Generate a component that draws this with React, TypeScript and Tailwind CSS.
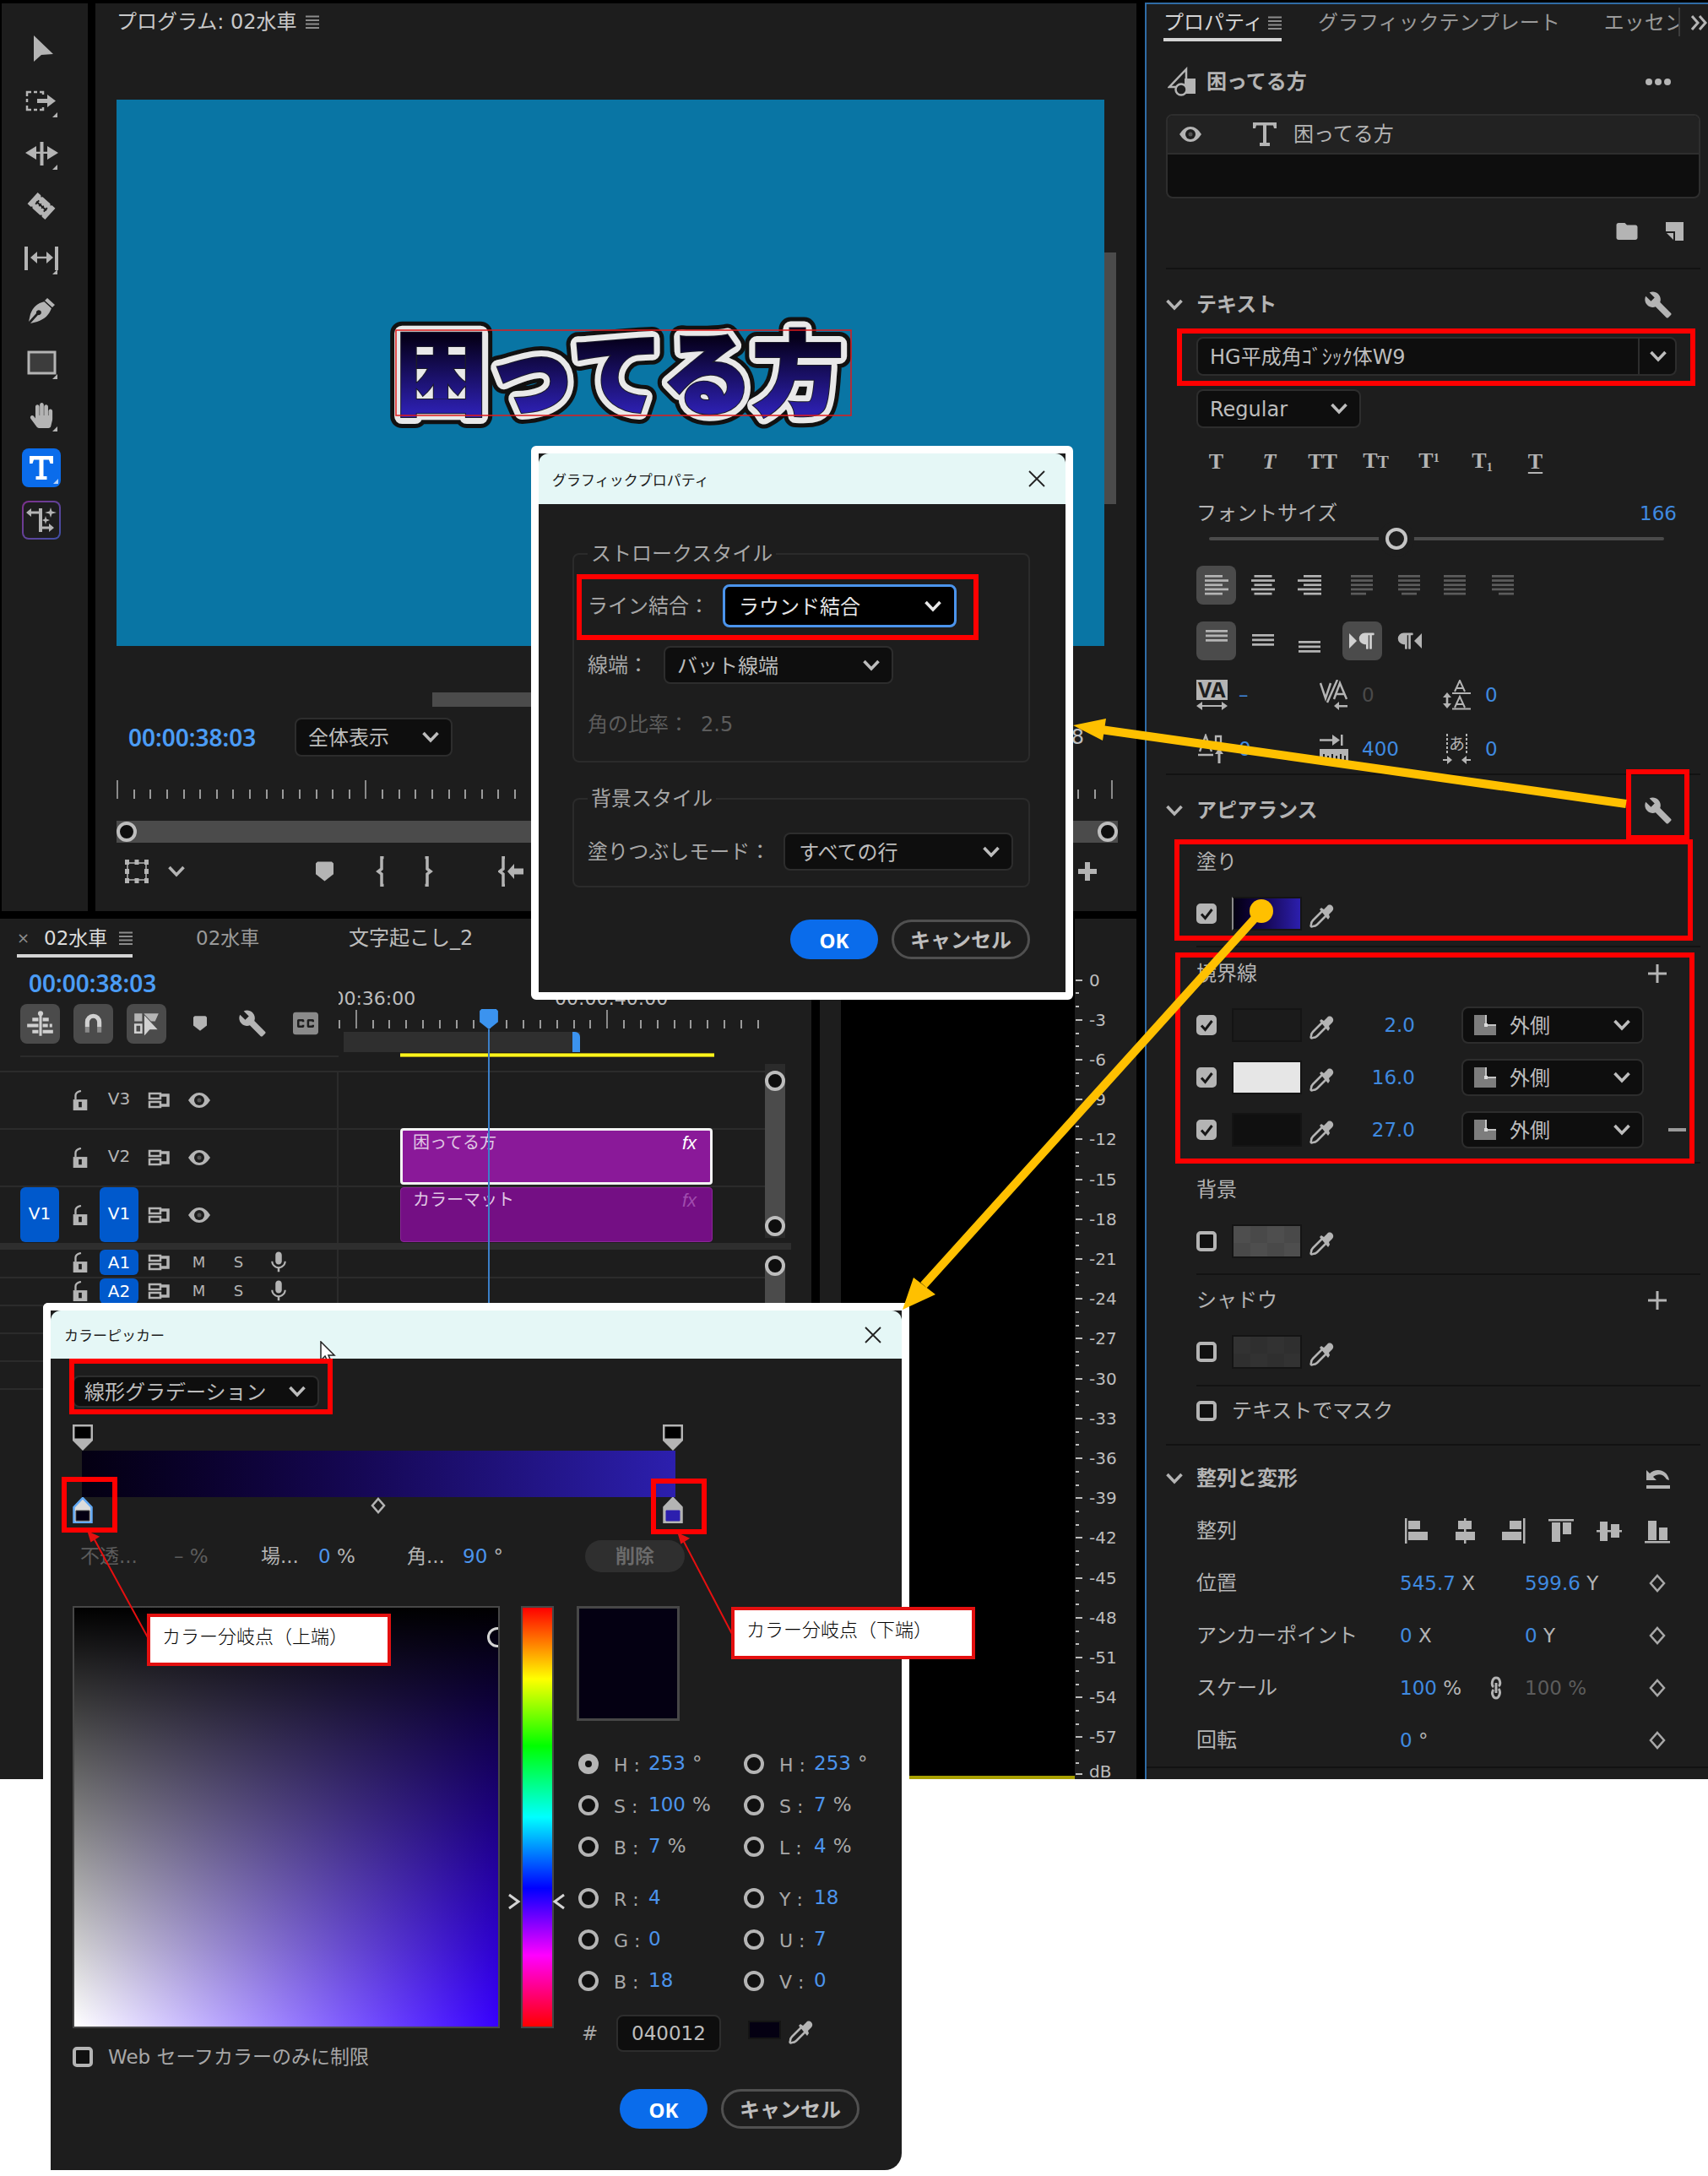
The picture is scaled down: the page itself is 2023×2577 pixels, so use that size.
import { useState } from 'react';
import type { ReactNode } from 'react';
import {
  MdBuild,
  MdClosedCaption,
  MdColorize,
  MdFolder,
  MdMic,
} from 'react-icons/md';
import { FaHandPaper, FaParagraph } from 'react-icons/fa';

/* ---------- small shared parts ---------- */

function Chevron({ className = '' }: { className?: string }) {
  return (
    <svg viewBox="0 0 20 14" className={`h-3.5 w-5 ${className}`} fill="none" stroke="currentColor" strokeWidth="3.6">
      <path d="M1.5 2 10 11l8.5-9" />
    </svg>
  );
}

function Burger() {
  return (
    <svg viewBox="0 0 16 16" className="size-4 text-[#8c8c8c]" stroke="currentColor" strokeWidth="2">
      <path d="M0 1.5h16M0 6h16M0 10.500h16M0 15h16" />
    </svg>
  );
}

type SelectBoxProps = {
  label: string;
  options: string[];
  className?: string;
  chevron?: string;
};

function SelectBox({ label, options, className = '', chevron = 'right-4' }: SelectBoxProps) {
  return (
    <div className="relative flex items-center text-[#bdbdbd]">
      <select
        aria-label={label}
        className={`appearance-none rounded-lg border-2 border-[#2d2d2d] bg-[#0e0e0e] pt-0.5 text-2xl leading-none outline-none ${className}`}
      >
        {options.map((o) => (
          <option key={o}>{o}</option>
        ))}
      </select>
      <Chevron className={`pointer-events-none absolute ${chevron}`} />
    </div>
  );
}

function CheckBox({ label, on = false, id }: { label: string; on?: boolean; id?: string }) {
  const [checked, setChecked] = useState(on);
  return (
    <span className="relative flex size-6 shrink-0">
      <input
        id={id}
        type="checkbox"
        aria-label={label}
        checked={checked}
        onChange={(e) => setChecked(e.target.checked)}
        className="size-6 appearance-none rounded-[5px] border-4 border-[#b4b4b4] bg-[#101010] checked:bg-[#b4b4b4]"
      />
      {checked && (
        <svg viewBox="0 0 24 24" className="pointer-events-none absolute size-6" fill="none" stroke="#161616" strokeWidth="3">
          <path d="m6 12.500 4.500 5L18.500 7" />
        </svg>
      )}
    </span>
  );
}

// bulb at the top right, hollow glass tube running to the bottom left
function Eyedropper() {
  return (
    <svg viewBox="0 0 30 30" className="mx-[3px] size-[30px] text-[#b4b4b4]">
      <path d="M15 10 4 21c-2 2-2 3-2 5-1 2 0 3 2 2 2 0 3 0 5-2l11-11" fill="none" stroke="currentColor" strokeWidth="2.500" strokeLinejoin="round" />
      <path d="m12 8 2-2 3 2 4-4c3-4 10 1 6 6l-4 4 1 3-2 3Z" fill="currentColor" />
    </svg>
  );
}

function Eye() {
  return (
    <svg viewBox="0 0 26 20" className="h-5 w-[26px] text-[#b4b4b4]">
      <path d="M0 10C4 4 8 1 13 1s9 3 13 9c-4 6-8 9-13 9S4 16 0 10Z" fill="currentColor" />
      <circle cx="13" cy="10" r="6" fill="#1d1d1d" />
      <circle cx="13" cy="10" r="2.500" fill="currentColor" opacity=".35" />
    </svg>
  );
}

function Marker({ className }: { className: string }) {
  return (
    <svg viewBox="0 0 20 22" className={className} fill="currentColor">
      <path d="M2 0h16l2 2v12l-10 8L0 14V2Z" />
    </svg>
  );
}

/* ---------- tools ---------- */

const corner = <path d="M42 36v6h-6Z" />;

const tools: { name: string; art: ReactNode }[] = [
  { name: '選択', art: <path d="M14 7v31l9-8 14-1Z" /> },
  {
    name: 'トラックの前方選択',
    art: (
      <>
        <g fill="none" stroke="currentColor" strokeWidth="2.500">
          <path d="M6 17v-5h5M14 12h4M21 12h4v3M6 20v4M6 28v5h5M14 33h4M21 33h4v-3" />
        </g>
        <path d="M18 20h12v-5l10 7.500L30 30v-5H18Z" />
        {corner}
      </>
    ),
  },
  {
    name: 'リップル',
    art: (
      <>
        <path d="M21.500 9h4v28h-4ZM4 22l13-8v16ZM43 22l-13-8v16Z" />
        <path d="M14 20.700h18v2.300H14Z" />
        {corner}
      </>
    ),
  },
  {
    name: 'レーザー',
    art: (
      <g transform="rotate(42 23 23)">
        <path d="M9 14h5l1.500 1.500L17 14h12l1.500 1.500L32 14h5v18h-5l-1.500-1.500L29 32H17l-1.500-1.500L14 32H9Z" />
        <path d="M15 23h16M16.500 20v6M29.500 20v6" stroke="#1d1d1d" strokeWidth="2" />
        <path d="M21 21v4M25 21v4" stroke="#1d1d1d" strokeWidth="1.500" />
      </g>
    ),
  },
  {
    name: 'スリップ',
    art: (
      <>
        <path d="M3 9h4v28H3ZM39 9h4v28h-4ZM10 22l8-7v14ZM37 22l-8-7v14Z" />
        <path d="M15 20.800h16v2.400H15Z" />
        {corner}
      </>
    ),
  },
  {
    name: 'ペン',
    art: (
      <>
        <path d="m27 12 8 8c-3 8-8 13-17 16l-8 2 9-10a3 3 0 1 0-2-2L8 36l2-9c3-8 8-13 17-15Z" />
        <path d="m26 11 4-4 10 9-4 4Z" stroke="#1d1d1d" strokeWidth="1.500" />
      </>
    ),
  },
  {
    name: '長方形',
    art: (
      <>
        <path d="M8 10h31v25H8Z" fill="#3c3c3c" stroke="currentColor" strokeWidth="3" />
        {corner}
      </>
    ),
  },
  { name: '手のひら', art: null },
  { name: '横書き文字', art: null },
  { name: '生成延長', art: null },
];

function ToolBar() {
  return (
    <nav className="flex w-[102px] flex-col items-center gap-4 bg-[#1d1d1d] pt-[31px] pr-2">
      {tools.map((t) => {
        if (t.name === '横書き文字') {
          return (
            <button key={t.name} aria-label={t.name} className="size-[46px] rounded-lg bg-[#0a6ceb] text-white">
              <svg viewBox="0 0 46 46" fill="currentColor">
                <path d="M9 9h28v9h-3.500l-1.500-4.500h-6.500V33h4v4h-13v-4h4V13.500H14L12.500 18H9Z" />
                <path d="M43 36v6h-6Z" opacity=".7" />
              </svg>
            </button>
          );
        }
        if (t.name === '生成延長') {
          return (
            <button key={t.name} aria-label={t.name} className="size-[46px] rounded-lg bg-linear-to-br from-[#7d2f8c] to-[#3c4fa6] p-[2px]">
              <svg viewBox="2 2 42 42" className="rounded-md bg-[#1d1d1d] text-[#b4b4b4]" fill="currentColor">
                <path d="M20 9h4v28h-4ZM5 14l6-5v3.500h10v3H11V19ZM38 32l-6-5v3.500h-8v3h8V37Z" />
                <path d="m34 8 1.500 4.500L41 14l-5.500 1.500L34 20l-1.500-4.500L27 14l5.500-1.500ZM28 18l1 3.500 4 1.500-4 1.500L28 28l-1-3.500-3-1.500 3-1.500Z" />
              </svg>
            </button>
          );
        }
        if (t.name === '手のひら') {
          return (
            <button key={t.name} aria-label={t.name} className="relative flex size-[46px] items-center justify-center text-[#b4b4b4]">
              <FaHandPaper className="size-[30px]" />
              <svg viewBox="0 0 46 46" className="absolute size-[46px]" fill="currentColor">
                {corner}
              </svg>
            </button>
          );
        }
        return (
          <button key={t.name} aria-label={t.name} className="size-[46px] text-[#b4b4b4]">
            <svg viewBox="0 0 46 46" fill="currentColor">
              {t.art}
            </svg>
          </button>
        );
      })}
    </nav>
  );
}

/* ---------- program monitor ---------- */

const titleText = '困ってる方';

function TitleGraphic() {
  const common = {
    x: 0,
    y: 91,
    fontSize: 107,
    fontWeight: 900,
    strokeLinejoin: 'round' as const,
  };
  return (
    <svg viewBox="0 0 539 101" className="block overflow-visible font-['Noto_Sans_CJK_JP',sans-serif]" aria-label={titleText}>
      <defs>
        <linearGradient id="titleFill" x1="0" y1="0" x2="0" y2="101" gradientUnits="userSpaceOnUse">
          <stop offset="0.1" stopColor="#06001c" />
          <stop offset="0.95" stopColor="#2c1fae" />
        </linearGradient>
      </defs>
      <text {...common} fill="#111" stroke="#111" strokeWidth="28" aria-hidden="true">{titleText}</text>
      <text {...common} fill="#e9e9e9" stroke="#e9e9e9" strokeWidth="18" aria-hidden="true">{titleText}</text>
      <text {...common} fill="#1b1b2a" stroke="#1b1b2a" strokeWidth="4" strokeLinejoin="miter" aria-hidden="true">{titleText}</text>
      <text {...common} fill="url(#titleFill)" stroke="url(#titleFill)" strokeWidth="2" strokeLinejoin="miter">{titleText}</text>
      <rect width="539" height="101" fill="none" stroke="#e01b1b" strokeWidth="1.500" />
    </svg>
  );
}

function ProgramPanel() {
  const ticks = Array.from({ length: 61 }, (_, i) => i);
  return (
    <section className="flex min-w-0 flex-1 flex-col bg-[#1d1d1d] pr-6 pb-[15px] pl-[25px] text-[#bdbdbd]">
      <header className="flex h-11 items-center">
        <h2 className="mr-2.5 text-[24px] leading-none text-[#c8c8c8]">プログラム: 02水車</h2>
        <Burger />
      </header>

      <div className="mt-[70px] flex">
        <div className="h-[647px] flex-1 bg-[#0975a4] pt-[273px] pl-[331px]">
          <div className="w-[539px]">
            <TitleGraphic />
          </div>
        </div>
        <div className="mt-[181px] h-[298px] w-3.5 bg-[#4b4b4b]" />
      </div>
      <div className="mt-[55px] ml-[374px] h-[17px] w-[420px] bg-[#4b4b4b]" />

      <div className="mt-[13px] flex h-[46px] items-center pl-[14px]">
        <span className="w-[197px] font-['Noto_Sans'] text-[28px] leading-none font-semibold text-[#4b9cf5]">00:00:38:03</span>
        <SelectBox label="ズームレベル" options={['全体表示']} className="h-[46px] w-[187px] pl-3.5" />
        <span className="ml-auto pr-[38px] text-2xl leading-none">8</span>
      </div>

      <div className="mt-7 mr-1 flex h-[22px] items-end justify-between">
        {ticks.map((i) => (
          <span key={i} className={i % 15 === 0 ? 'h-[22px] w-[2px] bg-[#8a8a8a]' : 'h-[11px] w-[2px] bg-[#9a9a9a]'} />
        ))}
      </div>

      <div className="mt-[26px] -mr-[2px] flex h-[26px] items-center justify-between bg-[#4b4b4b]">
        <span className="size-6 rounded-full border-4 border-[#bdbdbd] bg-[#0e0e0e]" />
        <span className="size-6 rounded-full border-4 border-[#bdbdbd] bg-[#0e0e0e]" />
      </div>

      <div className="flex h-[66px] items-center pt-0.5 text-[#b4b4b4]">
        <button aria-label="変形" className="ml-[9px]">
          <svg viewBox="0 0 30 28" className="h-7 w-[30px]" fill="currentColor">
            <path d="M4 4h22v20H4Z" fill="none" stroke="currentColor" strokeWidth="1.500" />
            <path d="M1 0h5v6H1ZM12.500 0h5v6h-5ZM24 0h5v6h-5ZM1 11h5v6H1ZM24 11h5v6h-5ZM1 22h5v6H1ZM12.500 22h5v6h-5ZM24 22h5v6h-5Z" />
          </svg>
        </button>
        <Chevron className="ml-[22px]" />
        <button aria-label="マーカーを追加" className="ml-[155px]">
          <Marker className="h-[26px] w-[21px]" />
        </button>
        <button aria-label="インをマーク" className="ml-[50px]">
          <svg viewBox="0 0 10 36" className="h-9 w-2.5" fill="none" stroke="currentColor" strokeWidth="3.500">
            <path d="M9.500 1.500H7V15l-4 3 4 3v13.500h2.500" />
          </svg>
        </button>
        <button aria-label="アウトをマーク" className="ml-[48px]">
          <svg viewBox="0 0 10 36" className="h-9 w-2.5" fill="none" stroke="currentColor" strokeWidth="3.500">
            <path d="M.5 1.500H3V15l4 3-4 3v13.500H.5" />
          </svg>
        </button>
        <button aria-label="インへ移動" className="ml-[77px]">
          <svg viewBox="0 0 30 36" className="h-9 w-[30px]" fill="currentColor">
            <path d="M8 1.500H6V15l-4 3 4 3v13.500h2" fill="none" stroke="currentColor" strokeWidth="3.500" />
            <path d="m11 18 8-9v5.500h11v7H19V27Z" />
          </svg>
        </button>
        <button aria-label="ボタンエディター" className="mr-[22px] ml-auto">
          <svg viewBox="0 0 24 24" className="size-6" stroke="currentColor" strokeWidth="6">
            <path d="M12 1v22M1 12h22" />
          </svg>
        </button>
      </div>
    </section>
  );
}

/* ---------- timeline ---------- */

function LockIcon() {
  return (
    <svg viewBox="0 0 20 26" className="ml-0.5 h-6 w-5 text-[#b4b4b4]">
      <path d="M4 12V7c0-4 3-5 7-6" fill="none" stroke="currentColor" strokeWidth="2.500" />
      <path d="M1 12h18v14H1Z" fill="currentColor" />
      <path d="M10 15v7" stroke="#1d1d1d" strokeWidth="4" />
    </svg>
  );
}

function SyncIcon() {
  return (
    <svg viewBox="0 0 26 20" className="h-5 w-[26px] text-[#b4b4b4]" fill="none" stroke="currentColor">
      <path d="M2 2h13v6H2ZM2 12h13v6H2Z" strokeWidth="2.500" />
      <path d="M16 4h8v12h-8" strokeWidth="3.500" />
    </svg>
  );
}

function TrackHead({ name, kind, on = false, patched = false }: { name: string; kind: 'v' | 'a'; on?: boolean; patched?: boolean }) {
  const size = kind === 'v' ? 'h-[65px]' : 'h-[30px]';
  return (
    <div className="grid w-[401px] grid-cols-[46px_48px_46px_48px_47px_47px_47px] content-start items-center justify-items-center border-r-2 border-[#2b2b2b] pl-6 text-xl leading-none text-[#b4b4b4]">
      {patched ? (
        <button className={`flex w-[46px] items-center justify-center rounded-md bg-[#0059cc] pb-1 text-white ${size}`}>V1</button>
      ) : (
        <span />
      )}
      <LockIcon />
      <button
        className={
          on
            ? `flex w-[46px] items-center justify-center rounded-md bg-[#0059cc] text-white ${kind === 'v' ? 'pb-1' : ''} ${size}`
            : `flex w-[46px] items-center justify-center pb-1 ${size}`
        }
      >
        {name}
      </button>
      <SyncIcon />
      {kind === 'v' ? (
        <Eye />
      ) : (
        <>
          <button className="text-lg leading-none">M</button>
          <button className="text-lg leading-none">S</button>
          <MdMic className="size-[30px]" />
        </>
      )}
    </div>
  );
}

function TimelinePanel() {
  const ticks = Array.from({ length: 26 }, (_, i) => i);
  return (
    <section className="relative min-w-0 flex-1 bg-[#1d1d1d] text-[#bdbdbd]">
      <div className="flex h-[46px] items-stretch pl-5 text-[23px] leading-none">
        <button className="flex w-[137px] items-center border-b-4 border-[#d4d4d4] pt-1 text-[#dcdcdc]">
          <span className="w-8 text-left text-lg text-[#8c8c8c]">×</span>
          <span className="flex-1 text-left">02水車</span>
          <Burger />
        </button>
        <button className="ml-[75px] w-[181px] text-left text-[#9a9a9a]">02水車</button>
        <button className="text-left text-2xl leading-none">文字起こし_2</button>
      </div>

      <div className="flex h-[134px] overflow-hidden">
        <div className="w-[401px] shrink-0">
          <div className="flex h-[55px] items-center pt-1 pl-[34px] font-['Noto_Sans'] text-[28px] leading-none font-semibold text-[#4b9cf5]">
            00:00:38:03
          </div>
          <div className="ml-6 flex h-[63px] items-start border-b-2 border-[#2b2b2b] text-[#b4b4b4]">
            <button aria-label="ネスト" className="size-[47px] rounded-lg bg-[#4b4b4b] text-[#d0d0d0]">
              <svg viewBox="0 0 46 46" fill="currentColor">
                <path d="M22 9h3v28h-3ZM14 16h7v4h-7ZM26 16h7v4h-7ZM8 23h13v4H8ZM26 23h6v4h-6ZM34 23h3v4h-3ZM14 30h7v4h-7ZM26 30h12v4H26Z" />
                <circle cx="23.500" cy="11" r="3" />
              </svg>
            </button>
            <button aria-label="スナップ" className="ml-4 size-[47px] rounded-lg bg-[#4b4b4b]">
              <svg viewBox="0 0 46 46" fill="none" strokeWidth="5">
                <path d="M16 27v-6a7 7 0 0 1 14 0v6" stroke="#d0d0d0" />
                <path d="M16 27v6M30 27v6" stroke="#8a8a8a" />
              </svg>
            </button>
            <button aria-label="リンクされた選択" className="ml-4 size-[47px] rounded-lg bg-[#4b4b4b]">
              <svg viewBox="0 0 46 46" fill="#d0d0d0">
                <path d="M9 11h9v9H9ZM20 11h17l-4 9H20Z" opacity=".8" />
                <path d="M10 24h7v9h-7Z" fill="none" stroke="#d0d0d0" strokeWidth="2.500" />
                <path d="M20 12v26l7-8h10Z" stroke="#4b4b4b" strokeWidth="1" />
              </svg>
            </button>
            <button aria-label="マーカー" className="mt-3 ml-8">
              <Marker className="h-[22px] w-4" />
            </button>
            <button aria-label="設定" className="mt-1.5 ml-[37px]">
              <MdBuild className="size-[34px]" />
            </button>
            <button aria-label="キャプション" className="mt-[3px] ml-[26px]">
              <MdClosedCaption className="size-10 text-[#8a8a8a]" />
            </button>
          </div>
        </div>
        <div className="flex-1 overflow-hidden pt-9">
          <div className="-ml-[43px] flex h-[22px] items-center pt-1 text-[22px] leading-none">
            <span className="w-[299px] shrink-0">00:00:36:00</span>
            <span className="w-[299px] shrink-0">00:00:40:00</span>
          </div>
          <div className="mt-1 flex h-[22px] w-[498px] items-end justify-between">
            {ticks.map((i) => (
              <span key={i} className={i % 15 === 1 ? 'h-[22px] w-[2px] bg-[#8a8a8a]' : 'h-2.5 w-[2px] bg-[#9a9a9a]'} />
            ))}
          </div>
          <div className="mt-1 ml-1.5 flex h-6 w-[280px] justify-end bg-[#2f2f2f]">
            <span className="h-6 w-[9px] rounded-tr-md bg-[#3b93ef]" />
          </div>
          <div className="mt-px ml-[73px] h-[5px] w-[372px] border-y border-[#a89d12] bg-[#fdf51c]" />
        </div>
      </div>

      <div className="flex">
        <div className="w-[906px]">
          <div className="flex h-[68px] border-t-2 border-[#2b2b2b]">
            <TrackHead name="V3" kind="v" />
          </div>
          <div className="flex h-[68px] border-t-2 border-[#2b2b2b]">
            <TrackHead name="V2" kind="v" />
            <div className="-mt-0.5 ml-[73px] flex h-[67px] w-[370px] items-start justify-between rounded-sm border-[3px] border-[#f4f4f4] bg-[#8a1999] px-3 pt-1 text-xl leading-none text-[#e0c8e4]">
              <span>困ってる方</span>
              <em className="pr-1 font-['Liberation_Sans'] text-[22px] leading-none text-white">fx</em>
            </div>
          </div>
          <div className="flex h-[68px] border-t-2 border-[#2b2b2b]">
            <TrackHead name="V1" kind="v" on patched />
            <div className="ml-[73px] flex h-[65px] w-[370px] items-start justify-between rounded-sm border border-[#8a2698] bg-[#740f84] px-3.5 pt-1 text-xl leading-none text-[#e0c8e4]">
              <span>カラーマット</span>
              <em className="pr-1 font-['Liberation_Sans'] text-[22px] leading-none text-[#a04cae]">fx</em>
            </div>
          </div>
          <div className="h-2 w-[937px] bg-[#2e2e2e]" />
          <div className="flex h-8">
            <TrackHead name="A1" kind="a" on />
          </div>
          <div className="flex h-[33px] border-t-2 border-[#2b2b2b]">
            <TrackHead name="A2" kind="a" on />
          </div>
          {[3, 4, 5].map((n) => (
            <div key={n} className="h-[33px] border-t-2 border-[#2b2b2b]" />
          ))}
          <div className="border-t-2 border-[#2b2b2b]" />
        </div>
        <div className="flex w-6 flex-col">
          <div className="-mt-2 flex h-[206px] flex-col bg-[#2b2b2b] pt-2">
            <div className="flex h-[196px] flex-col justify-between rounded-full bg-[#4b4b4b]">
              <span className="size-6 rounded-full border-4 border-[#bdbdbd] bg-[#0e0e0e]" />
              <span className="size-6 rounded-full border-4 border-[#bdbdbd] bg-[#0e0e0e]" />
            </div>
          </div>
          <div className="mt-[21px] h-[150px] rounded-t-full bg-[#4b4b4b]">
            <span className="block size-6 rounded-full border-4 border-[#bdbdbd] bg-[#0e0e0e]" />
          </div>
        </div>
      </div>

      {/* playhead */}
      <div className="absolute top-[107px] left-[568px] flex h-[350px] flex-col items-center text-[#3b93ef]">
        <Marker className="h-6 w-[22px]" />
        <span className="w-[2px] flex-1 bg-[#3b7fc8]" />
      </div>
    </section>
  );
}

function AudioMeters() {
  const levels = Array.from({ length: 20 }, (_, i) => (i === 0 ? '0' : `-${i * 3}`));
  return (
    <section className="w-[73px] bg-[#1d1d1d] pt-[49px] pl-px text-xl leading-none text-[#bdbdbd]">
      <ol className="flex h-[944px] flex-col">
        {levels.map((l) => (
          <li key={l} className="flex flex-1 items-center">
            <span className="flex w-4 flex-col justify-around self-stretch">
              <i className={l === '0' ? 'h-[2px] w-1' : 'h-[2px] w-1 bg-[#bdbdbd]'} />
              <i className="h-[2px] w-2 bg-[#bdbdbd]" />
              <i className="h-[2px] w-1 bg-[#bdbdbd]" />
            </span>
            {l}
          </li>
        ))}
      </ol>
      <div className="flex h-[26px] items-center">
        <span className="flex w-4 flex-col justify-around self-stretch">
          <i className="h-[2px] w-1 bg-[#bdbdbd]" />
          <i className="h-[2px] w-2 bg-[#bdbdbd]" />
        </span>
        <span className="pt-2">dB</span>
      </div>
    </section>
  );
}

/* ---------- properties ---------- */

function SectionHead({ title, children }: { title: string; children?: ReactNode }) {
  return (
    <div className="flex h-20 items-center pt-1 pr-[33px]">
      <Chevron className="mr-4" />
      <h3 className="flex-1 text-2xl leading-none font-bold">{title}</h3>
      {children}
    </div>
  );
}

function Divider({ indent = false }: { indent?: boolean }) {
  return <hr className={indent ? 'ml-9 border-t-2 border-[#121212]' : 'border-t-2 border-[#121212]'} />;
}

function ParagraphLines({ widths, align }: { widths: number[]; align: 'start' | 'center' | 'end' }) {
  const x = (w: number) => (align === 'start' ? 0 : align === 'end' ? 28 - w : (28 - w) / 2);
  return (
    <svg viewBox="0 0 28 30" className="h-[30px] w-7" fill="currentColor">
      {widths.map((w, i) => (
        <rect key={i} x={x(w)} y={3 + i * 5.2} width={w} height="2.7" />
      ))}
    </svg>
  );
}

const justify: { name: string; widths: number[]; align: 'start' | 'center' | 'end'; dim?: boolean; cell: string }[] = [
  { name: '左揃え', widths: [21, 28, 21, 28, 21], align: 'start', cell: 'w-[47px] rounded-lg bg-[#4b4b4b]' },
  { name: '中央揃え', widths: [21, 28, 21, 28, 21], align: 'center', cell: 'ml-2 w-[47px]' },
  { name: '右揃え', widths: [21, 28, 21, 28, 21], align: 'end', cell: 'ml-2 w-[47px]' },
  { name: '均等配置（左）', widths: [26, 26, 26, 26, 18], align: 'start', dim: true, cell: 'ml-4 w-[47px]' },
  { name: '均等配置（中央）', widths: [26, 26, 26, 26, 18], align: 'center', dim: true, cell: 'ml-2 w-[47px]' },
  { name: '両端揃え', widths: [26, 26, 26, 26, 26], align: 'start', dim: true, cell: 'ml-2 w-[47px]' },
  { name: '均等配置（右）', widths: [26, 26, 26, 26, 18], align: 'end', dim: true, cell: 'ml-2 w-[47px]' },
];

function VerticalLines({ y }: { y: number }) {
  return (
    <svg viewBox="0 0 26 34" className="h-[34px] w-[26px]" fill="currentColor">
      <path d={`M0 ${y}h26v2.700H0ZM0 ${y + 5.5}h26v2.700H0ZM0 ${y + 11}h26v2.700H0Z`} />
    </svg>
  );
}

function Metric({ icon, value, dim = false }: { icon: ReactNode; value: string; dim?: boolean }) {
  return (
    <div className="flex items-center gap-3">
      <svg viewBox="0 0 38 36" className="h-9 w-[38px] font-['Noto_Sans']" fill="currentColor">
        {icon}
      </svg>
      <span className={dim ? 'text-[#4a4a4a]' : 'text-[#3f8ae0]'}>{value}</span>
    </div>
  );
}

const strokes = [
  { width: '2.0', swatch: 'bg-[#1b1b1b]' },
  { width: '16.0', swatch: 'bg-[#e6e6e6]' },
  { width: '27.0', swatch: 'bg-[#101010]' },
];

function StrokeRow({ width, swatch, last }: { width: string; swatch: string; last: boolean }) {
  return (
    <div className="flex h-[62px] items-center">
      <CheckBox label={`境界線 ${width}`} on />
      <button aria-label="境界線カラー" className={`ml-[18px] h-10 w-[83px] border-2 border-[#141414] ${swatch}`} />
      <span className="ml-1.5 pt-1">
        <Eyedropper />
      </span>
      <span className="w-[92px] text-right text-[#3f8ae0]">{width}</span>
      <div className="relative ml-[55px] flex items-center">
        <SelectBox label="境界線の位置" options={['外側']} className="h-11 w-[216px] pl-[55px]" />
        <svg viewBox="0 0 26 26" className="pointer-events-none absolute left-[15px] size-[26px]">
          <path d="M0 1h15v11h11v13H0Z" fill="#7d7d7d" />
          <path d="M14 1v12h12" fill="none" stroke="#c4c4c4" strokeWidth="2" />
          <path d="M12 11h4v4h-4Z" fill="#dcdcdc" />
        </svg>
      </div>
      {last && (
        <button aria-label="境界線を削除" className="ml-[29px] h-1 w-[21px] bg-[#9a9a9a]" />
      )}
    </div>
  );
}

function Plus({ label }: { label: string }) {
  return (
    <button aria-label={label} className="mr-10 text-[#b4b4b4]">
      <svg viewBox="0 0 22 22" className="size-[22px]" stroke="currentColor" strokeWidth="3">
        <path d="M11 0v22M0 11h22" />
      </svg>
    </button>
  );
}

function Diamond() {
  return (
    <button aria-label="キーフレーム" className="mr-[41px] ml-auto text-[#a8a8a8]">
      <svg viewBox="0 0 20 22" className="h-[22px] w-5" fill="none" stroke="currentColor" strokeWidth="2.500">
        <path d="m10 2 8 9-8 9-8-9Z" />
      </svg>
    </button>
  );
}

const alignArt = [
  'M1 0h2.500v30H1ZM5 3h14v10H5ZM5 16h23v10H5Z',
  'M14 0h2.500v30H14ZM7 3h16v10H7ZM4 16h23v10H4Z',
  'M27 0h2.500v30H27ZM11 3h14v10H11ZM2 16h23v10H2Z',
  'M0 1h30v2.500H0ZM4 5h10v23H4ZM17 5h10v14H17Z',
  'M0 14h30v2.500H0ZM4 4h9v23H4ZM17 7h10v16H17Z',
  'M0 27h30v2.500H0ZM4 3h10v23H4ZM17 11h10v15H17Z',
];

function PropertiesPanel() {
  const [size, setSize] = useState(166);
  return (
    <aside className="flex w-[667px] shrink-0 flex-col overflow-hidden border-t-2 border-l-2 border-[#2f6ca6] bg-[#1d1d1d] text-[23px] leading-none text-[#b4b4b4]">
      <div className="flex h-11 shrink-0 items-stretch overflow-hidden pl-5 text-2xl leading-none whitespace-nowrap">
        <button className="flex w-[146px] items-center justify-between border-b-4 border-[#d4d4d4] pt-1 text-[#d4d4d4]">
          プロパティ
          <Burger />
        </button>
        <button className="ml-[43px] text-[#9a9a9a]">グラフィックテンプレート</button>
        <button className="ml-[52px] w-[92px] overflow-hidden text-left text-[#9a9a9a]">エッセンシャル</button>
        <div className="mt-1 h-[34px] w-[2px] bg-[#3c3c3c]" />
        <svg viewBox="0 0 20 20" className="mt-3 ml-[13px] size-5 shrink-0" fill="none" stroke="currentColor" strokeWidth="3">
          <path d="m1 2 7 8-7 8M10 2l7 8-7 8" />
        </svg>
      </div>

      <div className="pr-[9px] pl-[23px]">
        <div className="flex h-[86px] items-center pt-2.5 pr-[35px]">
          <svg viewBox="0 0 34 36" className="mr-3 ml-[2px] h-9 w-[34px]" fill="none" stroke="currentColor" strokeWidth="2.500">
            <path d="M22 3v21H2Z" />
            <path d="M20 14h13v18H20Z" fill="currentColor" stroke="none" />
            <circle cx="16" cy="27" r="6.500" fill="#1d1d1d" />
          </svg>
          <h2 className="flex-1 text-2xl leading-none font-bold">困ってる方</h2>
          <button aria-label="その他" className="flex gap-[3px]">
            <i className="size-2 rounded-full bg-[#b4b4b4]" />
            <i className="size-2 rounded-full bg-[#b4b4b4]" />
            <i className="size-2 rounded-full bg-[#b4b4b4]" />
          </button>
        </div>

        <div className="h-[100px] rounded-lg border-2 border-[#2e2e2e] bg-[#0e0e0e]">
          <button className="flex h-[46px] w-full items-center rounded-t-md border-b-2 border-[#2e2e2e] bg-[#222] pl-[14px] text-2xl leading-none">
            <Eye />
            <svg viewBox="0 0 28 28" className="mr-5 ml-[61px] size-7" fill="currentColor">
              <path d="M0 0h28v7h-3l-1-3.500h-8V24h4v4H8v-4h4V3.500H4L3 7H0Z" />
            </svg>
            困ってる方
          </button>
        </div>

        <div className="flex h-[82px] items-center justify-end pr-5 pb-1">
          <button aria-label="グループを作成">
            <MdFolder className="size-[30px]" />
          </button>
          <button aria-label="新規レイヤー" className="ml-[30px]">
            <svg viewBox="0 0 22 22" className="size-[22px]" fill="currentColor">
              <path d="M1 0h21v22H12V11H1Z" />
              <path d="M2 13h8v8Z" />
            </svg>
          </button>
        </div>

        <Divider />
        <SectionHead title="テキスト">
          <MdBuild className="size-[34px]" />
        </SectionHead>

        <div className="pr-7 pl-9">
          <div className="relative">
            <SelectBox label="フォント" options={['HG平成角ｺﾞｼｯｸ体W9']} className="h-[46px] w-[569px] pl-3.5" chevron="right-3" />
            <i className="absolute top-px right-[44px] h-11 w-[2px] bg-[#2d2d2d]" />
          </div>
          <div className="mt-4 w-[195px]">
            <SelectBox label="フォントスタイル" options={['Regular']} className="h-[46px] w-[195px] pl-3.5" />
          </div>

          <div className="flex h-[79px] items-center font-['Liberation_Serif'] text-[26px] leading-none font-bold">
            <button className="w-[47px]">T</button>
            <button className="ml-4 w-[47px] italic">T</button>
            <button className="ml-4 w-[47px]">TT</button>
            <button className="ml-4 w-[47px]">T<span className="text-xl">T</span></button>
            <button className="ml-4 w-[47px]">T<sup className="text-sm">1</sup></button>
            <button className="ml-4 w-[47px]">T<sub className="text-sm">1</sub></button>
            <button className="ml-4 w-[47px] underline underline-offset-4">T</button>
          </div>

          <div className="flex h-10 items-center justify-between pt-1">
            <label htmlFor="fontSize" className="text-2xl leading-none">フォントサイズ</label>
            <span className="text-[#3f8ae0]">{size}</span>
          </div>
          <div className="flex h-6 items-center px-[15px]">
            <input
              id="fontSize"
              type="range"
              min={0}
              max={408}
              value={size}
              onChange={(e) => setSize(Number(e.target.value))}
              className="h-1 w-full appearance-none rounded bg-[#4b4b4b] [&::-webkit-slider-thumb]:size-[26px] [&::-webkit-slider-thumb]:appearance-none [&::-webkit-slider-thumb]:rounded-full [&::-webkit-slider-thumb]:border-4 [&::-webkit-slider-thumb]:border-[#c4c4c4] [&::-webkit-slider-thumb]:bg-[#1d1d1d] [&::-webkit-slider-thumb]:shadow-[0_0_0_8px_#1d1d1d]"
            />
          </div>

          <div className="mt-5 flex">
            {justify.map((j) => (
              <button
                key={j.name}
                aria-label={j.name}
                className={`flex h-[46px] items-center justify-center ${j.cell} ${j.dim ? 'text-[#5c5c5c]' : ''}`}
              >
                <ParagraphLines widths={j.widths} align={j.align} />
              </button>
            ))}
          </div>
          <div className="mt-5 flex">
            <button aria-label="上揃え" className="flex h-[46px] w-[47px] items-center justify-center rounded-lg bg-[#4b4b4b]">
              <VerticalLines y={4} />
            </button>
            <button aria-label="中央" className="ml-2 flex h-[46px] w-[47px] items-center justify-center">
              <VerticalLines y={9} />
            </button>
            <button aria-label="下揃え" className="ml-2 flex h-[46px] w-[47px] items-center justify-center">
              <VerticalLines y={17} />
            </button>
            <button aria-label="左から右" className="ml-4 flex h-[46px] w-[47px] items-center justify-center rounded-lg bg-[#4b4b4b] text-[#d0d0d0]">
              <svg viewBox="0 0 10 20" className="h-[18px] w-[9px]" fill="currentColor"><path d="m0 0 10 10L0 20Z" /></svg>
              <FaParagraph className="size-[22px]" />
            </button>
            <button aria-label="右から左" className="ml-2 flex h-[46px] w-[47px] items-center justify-center">
              <FaParagraph className="size-[22px]" />
              <svg viewBox="0 0 10 20" className="h-[18px] w-[9px]" fill="currentColor"><path d="M10 0 0 10l10 10Z" /></svg>
            </button>
          </div>

          <div className="grid h-20 grid-cols-[146px_146px_1fr] items-center pt-0.5">
            <Metric
              value="–"
              icon={
                <>
                  <path d="M0 0h37v24H0Z" />
                  <text x="2" y="21" fontSize="25" fontWeight="700" fill="#1d1d1d">VA</text>
                  <path d="m0 31 7-5v4h23v-4l7 5-7 5v-4H7v4Z" />
                </>
              }
            />
            <Metric
              dim
              value="0"
              icon={
                <>
                  <path d="m1 4 6 18 6-18M21 0 9 27M17 23l7-19 8 19M19 17h11" fill="none" stroke="currentColor" strokeWidth="2.500" />
                  <path d="m17 31 6-5v4h10v2.500H23V36Z" />
                </>
              }
            />
            <Metric
              value="0"
              icon={
                <>
                  <path d="m14 14 6-13 6 13M16 10h8M11 16h22M14 33l6-13 6 13M16 29h8M11 34.500h22" fill="none" stroke="currentColor" strokeWidth="2" />
                  <path d="m5 15 5 6H6.300v7H10l-5 6-5-6h3.700v-7H0Z" />
                </>
              }
            />
          </div>
          <div className="grid h-[54px] grid-cols-[146px_146px_1fr] items-center pb-1">
            <Metric
              value="0"
              icon={
                <>
                  <path d="m4 21 7-19 7 19M6 15h10M2 25h18M23 3h6v8h-6ZM29 3v8" fill="none" stroke="currentColor" strokeWidth="2.300" />
                  <path d="m27 17 5 7h-3.500v11h-3V24H22Z" />
                </>
              }
            />
            <Metric
              value="400"
              icon={
                <>
                  <path d="M0 6.300h15V1l9 6.500-9 6.500V8.700H0ZM25 1h2.500v13H25Z" />
                  <path d="M0 18h34v14H0Z" />
                  <path d="M5 32v-8M10 32v-6M15 32v-8M20 32v-6M25 32v-8M30 32v-6" stroke="#1d1d1d" strokeWidth="2" />
                </>
              }
            />
            <Metric
              value="0"
              icon={
                <>
                  <path d="M5 0v24M28 0v24" fill="none" stroke="currentColor" strokeWidth="2" strokeDasharray="3 2" />
                  <text x="7" y="19" fontSize="19" className="font-['Noto_Sans_CJK_JP']">あ</text>
                  <path d="M0 30h5v-4l6 5-6 5v-4H0ZM33 30h-5v-4l-6 5 6 5v-4h5Z" />
                </>
              }
            />
          </div>
        </div>

        <Divider />
        <SectionHead title="アピアランス">
          <button aria-label="グラフィックプロパティ">
            <MdBuild className="size-[34px]" />
          </button>
        </SectionHead>

        <div className="pl-9 text-2xl leading-none">
          <h4 className="flex h-11 items-center pt-0.5">塗り</h4>
          <div className="flex h-[78px] items-center pt-0.5">
            <CheckBox label="塗り" on />
            <button
              aria-label="塗りカラー"
              className="ml-[18px] h-10 w-[83px] border-2 border-[#141414] border-l-[#8a8a8a] bg-linear-to-r from-[#040012] to-[#2c1fae]"
            />
            <span className="ml-1.5 pt-1">
              <Eyedropper />
            </span>
          </div>
        </div>
        <Divider indent />
        <div className="pt-px pb-[7px] pl-9">
          <div className="flex h-[60px] items-center justify-between">
            <h4 className="text-2xl leading-none">境界線</h4>
            <Plus label="境界線を追加" />
          </div>
          {strokes.map((s, i) => (
            <StrokeRow key={s.width} width={s.width} swatch={s.swatch} last={i === strokes.length - 1} />
          ))}
        </div>
        <Divider indent />
        <div className="pt-px pb-[7px] pl-9">
          <h4 className="flex h-[60px] items-center text-2xl leading-none">背景</h4>
          <div className="flex h-[62px] items-center">
            <CheckBox label="背景" />
            <button aria-label="背景カラー" className="ml-[18px] h-10 w-[83px] border-2 border-[#141414] bg-[repeating-conic-gradient(#494949_0_25%,#4e4e4e_0_50%)] bg-size-[40px_40px]" />
            <span className="ml-1.5 pt-1">
              <Eyedropper />
            </span>
          </div>
        </div>
        <Divider indent />
        <div className="pb-2 pl-9">
          <div className="flex h-[60px] items-center justify-between">
            <h4 className="text-2xl leading-none">シャドウ</h4>
            <Plus label="シャドウを追加" />
          </div>
          <div className="flex h-[62px] items-center">
            <CheckBox label="シャドウ" />
            <button aria-label="シャドウカラー" className="ml-[18px] h-10 w-[83px] border-2 border-[#141414] bg-[repeating-conic-gradient(#2f2f2f_0_25%,#323232_0_50%)] bg-size-[40px_40px]" />
            <span className="ml-1.5 pt-1">
              <Eyedropper />
            </span>
          </div>
        </div>
        <Divider indent />
        <div className="flex h-[68px] items-center gap-[18px] pb-2.5 pl-9">
          <CheckBox id="maskText" label="テキストでマスク" />
          <label htmlFor="maskText" className="text-2xl leading-none">テキストでマスク</label>
        </div>
        <Divider />

        <div className="flex h-[70px] items-center pt-2 pr-9">
          <Chevron className="mr-4" />
          <h3 className="flex-1 text-2xl leading-none font-bold">整列と変形</h3>
          <button aria-label="リセット">
            <svg viewBox="0 0 28 24" className="h-6 w-7" fill="currentColor">
              <path d="M0 20h28v4H0Z" />
              <path d="M0 2v12h12L8 10c5-4 12-4 16 3l3 1C25 1 11-1 4 6Z" />
            </svg>
          </button>
        </div>

        <div className="pl-9 [&>div]:flex [&>div]:h-[62px] [&>div]:items-center">
          <div>
            <span className="w-[246px] text-2xl leading-none">整列</span>
            <div className="flex gap-[27px]">
              {alignArt.map((d) => (
                <button key={d} aria-label="整列">
                  <svg viewBox="0 0 30 30" className="size-[30px]" fill="currentColor">
                    <path d={d} />
                  </svg>
                </button>
              ))}
            </div>
          </div>
          <div>
            <span className="w-[241px] text-2xl leading-none">位置</span>
            <span className="w-[148px]"><b className="font-normal text-[#3f8ae0]">545.7</b> X</span>
            <span><b className="font-normal text-[#3f8ae0]">599.6</b> Y</span>
            <Diamond />
          </div>
          <div>
            <span className="w-[241px] text-2xl leading-none">アンカーポイント</span>
            <span className="w-[148px]"><b className="font-normal text-[#3f8ae0]">0</b> X</span>
            <span><b className="font-normal text-[#3f8ae0]">0</b> Y</span>
            <Diamond />
          </div>
          <div>
            <span className="w-[241px] text-2xl leading-none">スケール</span>
            <span className="w-[107px]"><b className="font-normal text-[#3f8ae0]">100</b> %</span>
            <svg viewBox="0 0 14 28" className="mr-[27px] h-7 w-3.5" fill="none" stroke="currentColor" strokeWidth="3">
              <path d="M4 13C1 11 2 2 7 2s6 8 3 10M7 8v12M4 16c-3 3-1 10 3 10s6-8 3-11" />
            </svg>
            <span className="text-[#5c5c5c]">100 %</span>
            <Diamond />
          </div>
          <div>
            <span className="w-[241px] text-2xl leading-none">回転</span>
            <span><b className="font-normal text-[#3f8ae0]">0</b> °</span>
            <Diamond />
          </div>
        </div>
      </div>
      <hr className="border-t-2 border-[#121212]" />
      <div className="h-3" />
    </aside>
  );
}

/* ---------- dialogs ---------- */

function CloseIcon() {
  return (
    <svg viewBox="0 0 20 20" className="size-5" fill="none" stroke="#222" strokeWidth="1.800">
      <path d="m1 1 18 18M19 1 1 19" />
    </svg>
  );
}

function DialogButtons() {
  return (
    <>
      <button className="h-[47px] w-[104px] rounded-full bg-[#0a6ceb] pt-0.5 font-['Noto_Sans'] text-2xl leading-none font-bold text-white">OK</button>
      <button className="h-[47px] w-[164px] rounded-full border-[3px] border-[#505050] pt-0.5 text-2xl leading-none font-bold text-[#bdbdbd]">キャンセル</button>
    </>
  );
}

function GraphicPropertiesDialog() {
  return (
    <div role="dialog" className="absolute top-[528px] left-[629px] w-[642px] rounded-md border-[9px] border-white bg-[#1d1d1d] text-2xl leading-none text-[#a8a8a8]">
      <div className="flex h-[60px] items-center justify-between rounded-t-xl bg-[#e5f7f6] pr-6 pl-4">
        <h2 className="font-['Noto_Sans_CJK_JP'] text-[17px] leading-none text-[#1a1a1a]">グラフィックプロパティ</h2>
        <button aria-label="閉じる"><CloseIcon /></button>
      </div>
      <div className="pt-[47px] pr-[42px] pb-[39px] pl-10">
        <fieldset className="rounded-lg border-2 border-[#2b2b2b] pb-[31px] pl-4">
          <legend className="px-1">ストロークスタイル</legend>
          <div className="mt-6 flex h-[51px] items-center gap-4">
            <span>ライン結合：</span>
            <div className="relative flex items-center text-[#e8e8e8]">
              <select aria-label="ライン結合" className="h-[51px] w-[277px] appearance-none rounded-lg border-[3px] border-[#4b94ec] bg-black pt-0.5 pl-4 outline-none">
                <option>ラウンド結合</option>
              </select>
              <Chevron className="pointer-events-none absolute right-[18px]" />
            </div>
          </div>
          <div className="mt-[22px] flex h-[45px] items-center gap-[18px]">
            <span>線端：</span>
            <SelectBox label="線端" options={['バット線端']} className="h-[45px] w-[272px] pl-3.5" />
          </div>
          <div className="mt-9 flex h-6 items-center text-[#5c5c5c]">
            角の比率：<span className="ml-3.5">2.5</span>
          </div>
        </fieldset>
        <fieldset className="mt-[31px] rounded-lg border-2 border-[#2b2b2b] pb-[18px] pl-4">
          <legend className="px-1">背景スタイル</legend>
          <div className="mt-7 flex h-[45px] items-center gap-4">
            <span>塗りつぶしモード：</span>
            <SelectBox label="塗りつぶしモード" options={['すべての行']} className="h-[45px] w-[272px] pl-4" />
          </div>
        </fieldset>
        <div className="mt-[38px] flex justify-end gap-4">
          <DialogButtons />
        </div>
      </div>
    </div>
  );
}

function OpacityStop() {
  return (
    <svg viewBox="0 0 24 31" className="h-[31px] w-6">
      <path d="M0 0h24v19L12 31 0 19Z" fill="#b4b4b4" />
      <path d="M2.500 2.500h19v14h-19Z" fill="#000" />
    </svg>
  );
}

function ColorStop({ color, active = false }: { color: string; active?: boolean }) {
  return (
    <svg viewBox="0 0 24 31" className="h-[31px] w-6">
      <path d="M1.500 30V12L12 1l10.500 11v18Z" fill={active ? '#dcdcdc' : '#b4b4b4'} stroke={active ? '#62a9f5' : '#b4b4b4'} strokeWidth="2.500" />
      <path d="M4 16h16v12H4Z" fill={color} stroke={active ? '#444' : color} />
    </svg>
  );
}

type Channel = { name: string; value: string; unit?: string };

const channelRows: [Channel, Channel][] = [
  [{ name: 'H :', value: '253', unit: '°' }, { name: 'H :', value: '253', unit: '°' }],
  [{ name: 'S :', value: '100', unit: '%' }, { name: 'S :', value: '7', unit: '%' }],
  [{ name: 'B :', value: '7', unit: '%' }, { name: 'L :', value: '4', unit: '%' }],
  [{ name: 'R :', value: '4' }, { name: 'Y :', value: '18' }],
  [{ name: 'G :', value: '0' }, { name: 'U :', value: '7' }],
  [{ name: 'B :', value: '18' }, { name: 'V :', value: '0' }],
];

function ColorPickerDialog() {
  return (
    <div role="dialog" className="absolute top-[1543px] left-[51px] w-[1026px] rounded-t-md border-[9px] border-b-0 border-white bg-white text-[23px] leading-none text-[#a8a8a8]">
      <div className="rounded-br-[20px] bg-[#1d1d1d] pb-[49px]">
        <div className="flex h-[57px] items-center justify-between rounded-t-xl bg-[#e5f7f6] pr-6 pl-4">
          <h2 className="font-['Noto_Sans_CJK_JP'] text-[17px] leading-none text-[#1a1a1a]">カラーピッカー</h2>
          <button aria-label="閉じる"><CloseIcon /></button>
        </div>

        <div className="pt-5 pl-[26px]">
          <div className="w-[292px]">
            <SelectBox label="塗りの種類" options={['線形グラデーション']} className="h-[38px] w-[292px] pl-3" />
          </div>

          <div className="mt-5 w-[723px]">
            <div className="flex justify-between">
              <OpacityStop />
              <OpacityStop />
            </div>
            <div className="mr-[9px] ml-[11px] h-[55px] bg-linear-to-r from-[#040012] to-[#2c1fae]" />
            <div className="flex items-start justify-between">
              <ColorStop color="#040012" active />
              <svg viewBox="0 0 18 20" className="h-5 w-[18px]" fill="none" stroke="#b4b4b4" strokeWidth="2.500">
                <path d="m9 2 7 8-7 8-7-8Z" />
              </svg>
              <ColorStop color="#2c1fae" />
            </div>
          </div>

          <div className="mt-5 grid h-[38px] grid-cols-[111px_103px_68px_105px_66px_145px_118px] items-center pl-[9px] text-[#b4b4b4]">
            <span className="text-[#5c5c5c]">不透...</span>
            <span className="text-[#5c5c5c]">– %</span>
            <span>場...</span>
            <span><b className="font-normal text-[#4b94ec]">0</b> %</span>
            <span>角...</span>
            <span><b className="font-normal text-[#4b94ec]">90</b> °</span>
            <button disabled className="h-[38px] rounded-full bg-[#2f2f2f] font-bold text-[#6a6a6a]">削除</button>
          </div>

          <div className="mt-10 flex">
            <div className="w-[506px] shrink-0">
              <div className="relative h-[500px] overflow-hidden border-2 border-[#474747] bg-[linear-gradient(to_bottom,#000,transparent),linear-gradient(to_right,#fff,#3700ff)]">
                <span className="absolute top-[23px] -right-[11px] size-6 rounded-full border-[3px] border-[#d4d4d4]" />
              </div>
              <div className="mt-[22px] flex h-6 items-center gap-[18px]">
                <CheckBox id="webSafe" label="Web セーフカラーのみに制限" />
                <label htmlFor="webSafe" className="whitespace-nowrap">Web セーフカラーのみに制限</label>
              </div>
            </div>
            <div className="relative ml-[25px] h-[500px] w-[39px] shrink-0 border-2 border-[#474747] bg-[linear-gradient(to_bottom,#f00,#ff0_17%,#0f0_33%,#0ff_50%,#00f_67%,#f0f_83%,#f00)]">
              <svg viewBox="0 0 70 20" className="absolute top-[338px] -left-[18px] h-5 w-[70px] max-w-none" fill="none" stroke="#d4d4d4" strokeWidth="3">
                <path d="m2 2 11 8-11 8M67 2 56 10l11 8" />
              </svg>
            </div>

            <div className="ml-[27px] w-[385px] shrink-0">
              <div className="h-[136px] w-[122px] border-[3px] border-[#474747] bg-[#040012]" />
              <div className="mt-[26px]">
                {channelRows.map((row, r) => (
                  <div key={r} className={r === 3 ? 'mt-3 flex' : 'flex'}>
                    {row.map((c, i) => (
                      <label key={i} className="flex h-[49px] w-[196px] shrink-0 items-center pl-[2px]">
                        <input
                          type="radio"
                          name="channel"
                          defaultChecked={r === 0 && i === 0}
                          className="mr-[18px] size-6 appearance-none rounded-full border-4 border-[#b4b4b4] bg-[#101010] checked:border-8"
                        />
                        <span className="w-[41px] pt-1 text-[22px] leading-none">{c.name}</span>
                        <span className="text-[#4b94ec]">{c.value}</span>
                        {c.unit && <span className="ml-2">{c.unit}</span>}
                      </label>
                    ))}
                  </div>
                ))}
              </div>
              <div className="mt-4 flex h-11 items-center pl-[6px]">
                <label htmlFor="hex" className="w-[41px]">#</label>
                <input id="hex" defaultValue="040012" className="h-11 w-[124px] rounded-lg border-2 border-[#2d2d2d] bg-[#0e0e0e] pl-4 text-[#bdbdbd] outline-none" />
                <i className="mr-1.5 mb-2 ml-8 h-[22px] w-[39px] border-2 border-[#141414] bg-[#040012]" />
                <span className="pb-1">
                  <Eyedropper />
                </span>
              </div>
              <div className="mt-11 flex gap-4 pl-[51px]">
                <DialogButtons />
              </div>
            </div>
          </div>
        </div>
      </div>
    </div>
  );
}

/* ---------- annotations on top of the windows ---------- */

function Annotations() {
  const box = 'absolute border-[6px] border-[#ff0000]';
  const note =
    "absolute h-[62px] w-[289px] border-4 border-[#e41010] bg-white pl-3.5 font-['Noto_Sans_CJK_JP'] text-[22px] leading-none font-light text-black";
  return (
    <div className="pointer-events-none absolute inset-0">
      <svg viewBox="0 0 20 30" className="absolute top-[1588px] left-[379px] h-[30px] w-5">
        <path d="M1 1v22l5-5 5 10 3-2-4-9h7Z" fill="#fff" stroke="#222" strokeWidth="1.500" />
      </svg>
      <div className={`${box} top-[389px] left-[1394px] h-[68px] w-[614px]`} />
      <div className={`${box} top-[911px] left-[1926px] h-[84px] w-[75px]`} />
      <div className={`${box} top-[994px] left-[1391px] h-[120px] w-[614px]`} />
      <div className={`${box} top-[1128px] left-[1392px] h-[250px] w-[615px]`} />
      <div className={`${box} top-[680px] left-[683px] h-[78px] w-[476px]`} />
      <div className={`${box} top-[1609px] left-[82px] h-[66px] w-[312px]`} />
      <div className={`${box} top-[1749px] left-[73px] h-[66px] w-[66px]`} />
      <div className={`${box} top-[1751px] left-[771px] h-[66px] w-[66px]`} />
      <svg width="2023" height="2107" className="absolute top-0 left-0 max-w-none">
        <g stroke="#ffc000" strokeWidth="10" fill="#ffc000">
          <path d="M1926 952 1304 864M1494 1079 1094 1522" />
          <path d="m1271 859 39-8-4 26ZM1069 1551l13-38 26 20Z" stroke="none" />
          <circle cx="1494" cy="1079" r="14" stroke="none" />
        </g>
        <g stroke="#e41010" strokeWidth="2" fill="#e41010">
          <path d="m176 1941-67-123M867 1935l-60-115" />
          <path d="m105 1815 11 5-8 5ZM804 1817l11 5-8 5Z" />
        </g>
      </svg>
      <div className={`${note} top-[1911px] left-[174px] pt-2.5`}>カラー分岐点（上端）</div>
      <div className={`${note} top-[1903px] left-[866px] pt-2.5`}>カラー分岐点（下端）</div>
    </div>
  );
}

export default function App() {
  return (
    <main className="relative min-h-screen overflow-hidden bg-white font-['DejaVu_Sans','Noto_Sans_CJK_JP',sans-serif]">
      <div className="flex gap-2.5 bg-black pt-[3px]">
        <div className="flex min-w-0 flex-1 flex-col gap-[9px] pt-px">
          <div className="flex gap-[9px] pl-[2px]">
            <ToolBar />
            <ProgramPanel />
          </div>
          <div className="flex flex-1">
            <TimelinePanel />
            <div className="ml-2.5 w-[25px] bg-[#1d1d1d]" />
            <div className="flex w-[277px] items-end">
              <div className="h-1 w-full bg-[#a8a000]" />
            </div>
            <AudioMeters />
          </div>
        </div>
        <PropertiesPanel />
      </div>
      <GraphicPropertiesDialog />
      <ColorPickerDialog />
      <Annotations />
    </main>
  );
}
